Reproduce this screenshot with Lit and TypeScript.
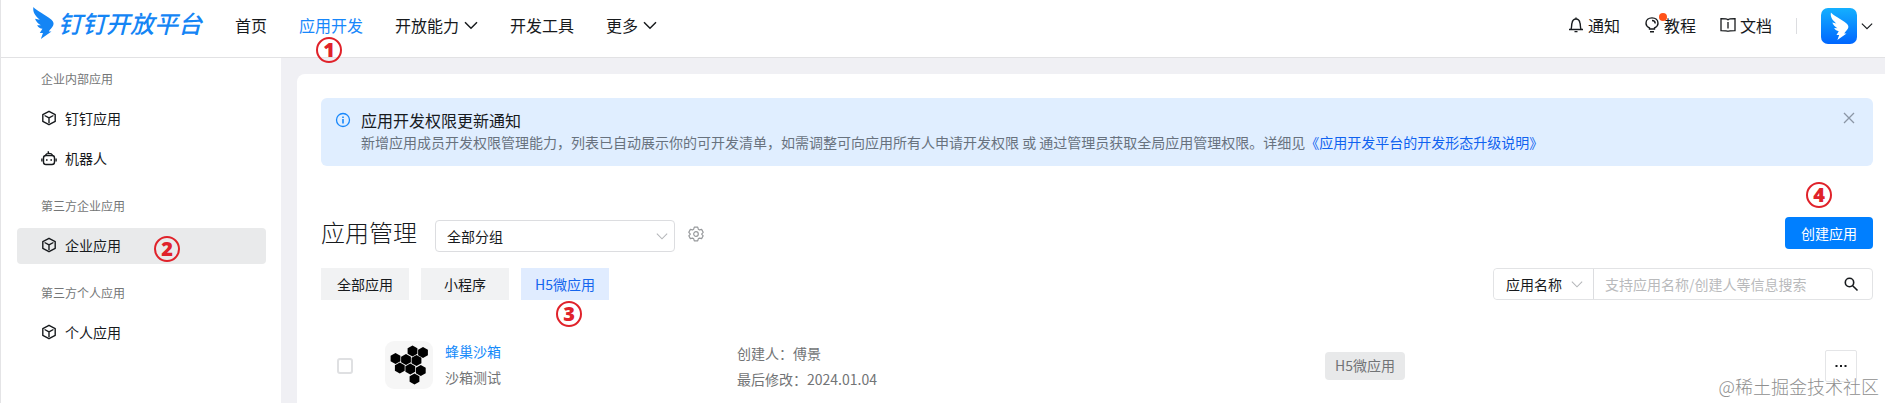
import { LitElement, html, css, svg } from "lit";
import { customElement, state } from "lit/decorators.js";
import { classMap } from "lit/directives/class-map.js";

const birdPath = svg`<path d="M1 1 C3 4 12 8 18 13 C20 15 20.500 16.500 19.500 18.500 C18.500 20.500 16.500 22 15.500 24 H18 L8 31 L10 25.500 H7 L9.500 21.500 C7.500 21 5.500 20 4.500 18 L8 18.200 C5.500 16.500 3.500 15 2.500 12 L7 13 C3.500 10 0 6.500 1 1 Z"/>`;

const chevron = (size: number, weight: number) => html`<svg width=${size} height=${size} viewBox="0 0 14 14" fill="none" stroke="currentColor" stroke-width=${weight} aria-hidden="true"><path d="M1 4.200 L7 10.200 L13 4.200"/></svg>`;

const cube = html`<svg width="16" height="16" viewBox="0 0 16 16" fill="none" stroke="currentColor" stroke-width="1.400" stroke-linejoin="round" aria-hidden="true"><path d="M8 1.300 L14.200 4.600 V11.400 L8 14.700 L1.800 11.400 V4.600 Z M3.600 5.500 L8 7.900 L12.400 5.500 M8 7.900 V13"/></svg>`;

const robot = html`<svg width="16" height="16" viewBox="0 0 16 16" fill="none" stroke="currentColor" stroke-width="1.400" aria-hidden="true"><rect x="2.500" y="5.500" width="11" height="9" rx="2.500"/><path d="M0.900 8.500 V11.500 M15.100 8.500 V11.500 M4.600 5 C5.500 2.800 10.500 2.800 11.400 5 M7.300 3.200 V1.200"/><path d="M5 10 H6.600 M9.400 10 H11" stroke-width="1.600"/></svg>`;

const groups = [
  { title: "企业内部应用", items: [{ name: "钉钉应用", icon: cube }, { name: "机器人", icon: robot }] },
  { title: "第三方企业应用", items: [{ name: "企业应用", icon: cube, step: 2 }] },
  { title: "第三方个人应用", items: [{ name: "个人应用", icon: cube }] },
];

const tabs = ["全部应用", "小程序", "H5微应用"];

const cells = [[27.500, 10], [38, 11.500], [10.500, 17.500], [21, 18.500], [31.500, 19.500], [14.800, 27], [25.300, 28], [35.800, 29.500], [29.500, 38]];
const hexagon = ([x, y]: number[]) => svg`<path d="M${x} ${y - 5.600} l4.900 2.800 v5.600 l-4.900 2.800 l-4.900 -2.800 v-5.600 z"/>`;

@customElement("app-root")
export class AppRoot extends LitElement {
  @state() private current = "企业应用";
  @state() private tab = "H5微应用";

  static styles = css`
    :host {
      display: flex;
      flex-direction: column;
      position: relative;
      box-sizing: border-box;
      min-height: 100vh;
      border-left: 1px solid #e4e4e6;
      background: #f0f0f4;
      color: #171a1d;
      font: 14px/22px "Noto Sans CJK SC", sans-serif;
    }
    * { box-sizing: border-box; }
    a { color: inherit; text-decoration: none; }
    svg { display: block; flex: none; }
    button, select, input { font: inherit; color: inherit; margin: 0; }
    button { cursor: pointer; }
    h1, h2, p { margin: 0; font-weight: 400; }

    .step {
      position: absolute;
      width: 26px;
      height: 26px;
      border: 2px solid #e0222a;
      border-radius: 50%;
      color: #e0222a;
      font: 800 20px/22px "Open Sans", sans-serif;
      text-align: center;
      pointer-events: none;
    }

    .header {
      display: flex;
      align-items: center;
      height: 58px;
      padding: 0 12px 6px 31px;
      border-bottom: 1px solid #e2e2e4;
      background: #fff;
      font-size: 16px;
      line-height: 24px;
    }
    .logo {
      display: flex;
      align-items: center;
      gap: 3px;
      margin-right: 33px;
      padding-bottom: 5px;
      color: #1485f5;
      font-size: 24px;
      font-weight: 500;
      font-style: italic;
      white-space: nowrap;
    }
    .nav { display: flex; gap: 32px; flex: 1; padding-bottom: 2px; white-space: nowrap; }
    .nav a { display: flex; align-items: center; gap: 5px; position: relative; }
    .nav .on { color: #1787fb; }
    .nav .step { left: 17px; top: 24px; }
    .tools { display: flex; align-items: center; gap: 24px; white-space: nowrap; }
    .tools a { display: flex; align-items: center; gap: 4px; position: relative; padding-bottom: 2px; }
    .dot {
      position: absolute;
      left: 15px;
      top: 0;
      width: 8px;
      height: 8px;
      border-radius: 50%;
      background: #ff5219;
    }
    .rule { width: 1px; height: 16px; background: #dcdde0; }
    .account {
      display: flex;
      align-items: center;
      gap: 4px;
      padding: 0;
      border: 0;
      background: none;
    }

    .body { display: flex; flex: 1; }
    .side {
      display: flex;
      flex-direction: column;
      gap: 19px;
      width: 280px;
      padding: 11px 15px 0 16px;
      background: #fff;
    }
    .side h2 {
      padding: 0 24px;
      margin-bottom: 12px;
      color: #747677;
      font-size: 12px;
      line-height: 20px;
    }
    .list { display: flex; flex-direction: column; gap: 4px; }
    .list a {
      display: flex;
      align-items: center;
      gap: 8px;
      position: relative;
      height: 36px;
      padding: 0 24px 2px;
      border-radius: 4px;
    }
    .list .on { background: #e9eaeb; }
    .list .step { left: 137px; top: 8px; }

    .main { flex: 1; min-width: 0; padding: 16px 0 0 16px; display: flex; }
    .card {
      flex: 1;
      min-width: 0;
      padding: 24px 12px 0 24px;
      border-radius: 8px 0 0 0;
      background: #fff;
    }
    .notice {
      display: flex;
      gap: 10px;
      padding: 11px 16px 13px 14px;
      border-radius: 6px;
      background: #e0eeff;
    }
    .notice svg { margin-top: 3px; color: #1787fb; }
    .notice h2 { font-size: 16px; line-height: 22px; }
    .notice p { color: #68727e; }
    .notice p a { color: #0f62f0; }
    .words { flex: 1; min-width: 0; }
    .close { align-self: flex-start; padding: 0; border: 0; background: none; }
    .notice .close svg { margin-top: 1px; color: #8b96a5; }

    .bar { display: flex; align-items: center; }
    .top { margin-top: 50px; height: 36px; }
    .top h1 {
      margin-right: 18px;
      padding-bottom: 5px;
      font-size: 24px;
      line-height: 32px;
      font-weight: 300;
      white-space: nowrap;
    }
    .pick { display: grid; align-items: center; }
    .pick select, .pick svg { grid-area: 1 / 1; }
    .pick svg { justify-self: end; margin-right: 7px; color: #b4b6b9; pointer-events: none; }
    .pick select {
      appearance: none;
      height: 32px;
      padding: 0 24px 0 11px;
      border: 1px solid #dcdde0;
      border-radius: 4px;
      background: #fff;
    }
    .group { width: 240px; margin-right: 13px; margin-top: 4px; }
    .gear { padding: 0; border: 0; background: none; color: #97999c; }
    .create {
      position: relative;
      height: 32px;
      padding: 0 16px;
      margin: 0 0 2px auto;
      border: 0;
      border-radius: 4px;
      background: #007fff;
      color: #fff;
    }
    .create .step { left: 21px; top: -35px; }

    .filters { gap: 12px; margin-top: 16px; }
    .tab {
      position: relative;
      width: 88px;
      height: 32px;
      padding: 0;
      border: 0;
      background: #f1f2f3;
    }
    .tab.on { background: #e0ecff; color: #1566ee; }
    .tab .step { left: 35px; top: 33px; }
    .search {
      display: flex;
      align-items: center;
      width: 380px;
      height: 32px;
      margin-left: auto;
      border: 1px solid #e2e3e5;
      border-radius: 4px;
    }
    .search .pick { width: 100px; }
    .search .pick svg { margin-right: 11px; }
    .search .pick select { height: 30px; border-width: 0 1px 0 0; border-radius: 4px 0 0 4px; padding-left: 12px; }
    .search input {
      flex: 1;
      min-width: 0;
      height: 30px;
      padding: 0 11px;
      border: 0;
      outline: 0;
      background: none;
    }
    .search input::placeholder { color: #b9babc; }
    .go { padding: 0; margin-right: 13px; border: 0; background: none; }

    .row {
      display: grid;
      grid-template-columns: 48px minmax(0, 352fr) minmax(0, 588fr) minmax(0, 500fr) 32px;
      align-items: center;
      height: 52px;
      margin-top: 40px;
      padding: 0 16px;
      color: #727476;
    }
    .row input {
      appearance: none;
      width: 16px;
      height: 16px;
      margin: 0;
      border: 2px solid #dfe0e2;
      border-radius: 3px;
      background: #fff;
    }
    .app { display: flex; align-items: center; align-self: start; gap: 12px; }
    .pair { display: flex; flex-direction: column; gap: 4px; white-space: nowrap; }
    .app .pair { padding-bottom: 2px; }
    .pair a { color: #1389fa; }
    .tag { justify-self: start; padding: 2px 10px 4px; border-radius: 4px; background: #e8e9ea; }
    .more {
      display: grid;
      place-items: center;
      width: 32px;
      height: 32px;
      padding: 0;
      border: 1px solid #e4e5e7;
      border-radius: 2px;
      background: #fff;
      color: #171a1d;
    }
    .mark {
      position: absolute;
      right: 6px;
      bottom: 4px;
      color: #8f8f8f;
      font-size: 18px;
      line-height: 26px;
      font-weight: 300;
      text-shadow: 0 0 2px #fff;
      pointer-events: none;
    }
  `;

  render() {
    return html`
      <header class="header">
        <a class="logo" href="#">
          <svg width="23" height="34" viewBox="0 0 21 32" fill="currentColor" aria-hidden="true">${birdPath}</svg>
          <span>钉钉开放平台</span>
        </a>
        <nav class="nav">
          <a href="#">首页</a>
          <a class="on" href="#">应用开发<span class="step">1</span></a>
          <a href="#">开放能力${chevron(14, 1.5)}</a>
          <a href="#">开发工具</a>
          <a href="#">更多${chevron(14, 1.5)}</a>
        </nav>
        <div class="tools">
          <a href="#">
            <svg width="16" height="16" viewBox="0 0 16 16" fill="none" stroke="currentColor" stroke-width="1.400" aria-hidden="true"><path d="M1 12.500 H15 M2.800 12.500 C4 11 3.300 8.500 4 6 C4.500 3.500 6 2 8 2 C10 2 11.500 3.500 12 6 C12.700 8.500 12 11 13.200 12.500 M6.500 14.600 H9.500 M8 0.600 V2"/></svg>
            <span>通知</span>
          </a>
          <a href="#">
            <svg width="16" height="16" viewBox="0 0 16 16" fill="none" stroke="currentColor" stroke-width="1.400" aria-hidden="true"><path d="M5.500 12 V11 C3.500 10 2 8.500 2 6.200 C2 3 4.500 0.900 8 0.900 C11.500 0.900 14 3 14 6.200 C14 8.500 12.500 10 10.500 11 V12 Z M6 14.800 H10 M8 3.500 C10 3.500 11.200 4.500 11.200 6.500"/></svg>
            <span>教程</span><span class="dot"></span>
          </a>
          <a href="#">
            <svg width="16" height="16" viewBox="0 0 16 16" fill="none" stroke="currentColor" stroke-width="1.300" aria-hidden="true"><path d="M8 2.800 C7 1.700 5 1.700 1 1.700 V13.700 C5 13.700 7 13.700 8 14.300 C9 13.700 11 13.700 15 13.700 V1.700 C11 1.700 9 1.700 8 2.800 Z M8 5 V11.500"/></svg>
            <span>文档</span>
          </a>
          <span class="rule"></span>
          <button class="account" aria-label="账号">
            <svg width="36" height="36" viewBox="0 0 36 36" aria-hidden="true">
              <defs><linearGradient id="sky" x1="0" y1="0" x2="0" y2="1"><stop offset="0" stop-color="#14b0ff"/><stop offset="1" stop-color="#0066ff"/></linearGradient></defs>
              <rect width="36" height="36" rx="7" fill="url(#sky)"/>
              <g transform="translate(9 3.500) scale(.92)" fill="#fff">${birdPath}</g>
            </svg>
            ${chevron(12, 1.3)}
          </button>
        </div>
      </header>
      <div class="body">
        <aside class="side">
          ${groups.map((g) => html`
            <section>
              <h2>${g.title}</h2>
              <nav class="list">
                ${g.items.map((i: any) => html`
                  <a href="#" class=${classMap({ on: i.name === this.current })} @click=${() => (this.current = i.name)}>
                    ${i.icon}${i.name}${i.step ? html`<span class="step">${i.step}</span>` : ""}
                  </a>`)}
              </nav>
            </section>`)}
        </aside>
        <main class="main">
          <div class="card">
            <section class="notice">
              <svg width="16" height="16" viewBox="0 0 16 16" fill="none" stroke="currentColor" stroke-width="1.300" aria-hidden="true"><circle cx="8" cy="8" r="6.500"/><path d="M8 4.500 V6 M8 7 V11.500" stroke-width="1.600"/></svg>
              <div class="words">
                <h2>应用开发权限更新通知</h2>
                <p>新增应用成员开发权限管理能力，列表已自动展示你的可开发清单，如需调整可向应用所有人申请开发权限 或 通过管理员获取全局应用管理权限。详细见<a href="#">《应用开发平台的开发形态升级说明》</a></p>
              </div>
              <button class="close" aria-label="关闭">
                <svg width="16" height="16" viewBox="0 0 16 16" fill="none" stroke="currentColor" stroke-width="1.300"><path d="M3 3 L13 13 M13 3 L3 13"/></svg>
              </button>
            </section>
            <div class="bar top">
              <h1>应用管理</h1>
              <div class="pick group">
                <select aria-label="分组"><option>全部分组</option></select>
                ${chevron(12, 1.2)}
              </div>
              <button class="gear" aria-label="设置">
                <svg width="16" height="16" viewBox="0 0 16 16" fill="none" stroke="currentColor" stroke-width="1.200" stroke-linejoin="round"><path d="M6.300 1.200 H9.700 L10.300 3.200 L11.500 3.900 L13.600 3.400 L15.200 6.300 L13.800 7.800 V8.400 L15.200 9.800 L13.600 12.600 L11.500 12.100 L10.300 12.800 L9.700 14.800 H6.300 L5.700 12.800 L4.500 12.100 L2.400 12.600 L0.800 9.800 L2.200 8.400 V7.800 L0.800 6.300 L2.400 3.400 L4.500 3.900 L5.700 3.200 Z"/><circle cx="8" cy="8" r="2.300"/></svg>
              </button>
              <button class="create">创建应用<span class="step">4</span></button>
            </div>
            <div class="bar filters">
              ${tabs.map((t) => html`
                <button class=${classMap({ tab: true, on: t === this.tab })} @click=${() => (this.tab = t)}>
                  ${t}${t === "H5微应用" ? html`<span class="step">3</span>` : ""}
                </button>`)}
              <div class="search">
                <div class="pick">
                  <select aria-label="搜索字段"><option>应用名称</option></select>
                  ${chevron(12, 1.2)}
                </div>
                <input type="text" aria-label="搜索" placeholder="支持应用名称/创建人等信息搜索" />
                <button class="go" aria-label="查询">
                  <svg width="16" height="16" viewBox="0 0 16 16" fill="none" stroke="currentColor" stroke-width="1.600"><circle cx="6.500" cy="6.500" r="4.200"/><path d="M9.700 9.700 L14.500 14.500"/></svg>
                </button>
              </div>
            </div>
            <div class="row">
              <input type="checkbox" aria-label="选择蜂巢沙箱" />
              <div class="app">
                <svg width="48" height="48" viewBox="0 0 48 48" aria-hidden="true"><rect width="48" height="48" rx="9" fill="#f6f6f6"/>${cells.map(hexagon)}</svg>
                <div class="pair"><a href="#">蜂巢沙箱</a><span>沙箱测试</span></div>
              </div>
              <div class="pair"><span>创建人：傅景</span><span>最后修改：2024.01.04</span></div>
              <span class="tag">H5微应用</span>
              <button class="more" aria-label="更多操作">
                <svg width="12" height="4" viewBox="0 0 12 4" fill="currentColor"><path d="M0.500 1h2v2h-2z M5 1h2v2h-2z M9.500 1h2v2h-2z"/></svg>
              </button>
            </div>
          </div>
        </main>
      </div>
      <div class="mark">@稀土掘金技术社区</div>
    `;
  }
}
